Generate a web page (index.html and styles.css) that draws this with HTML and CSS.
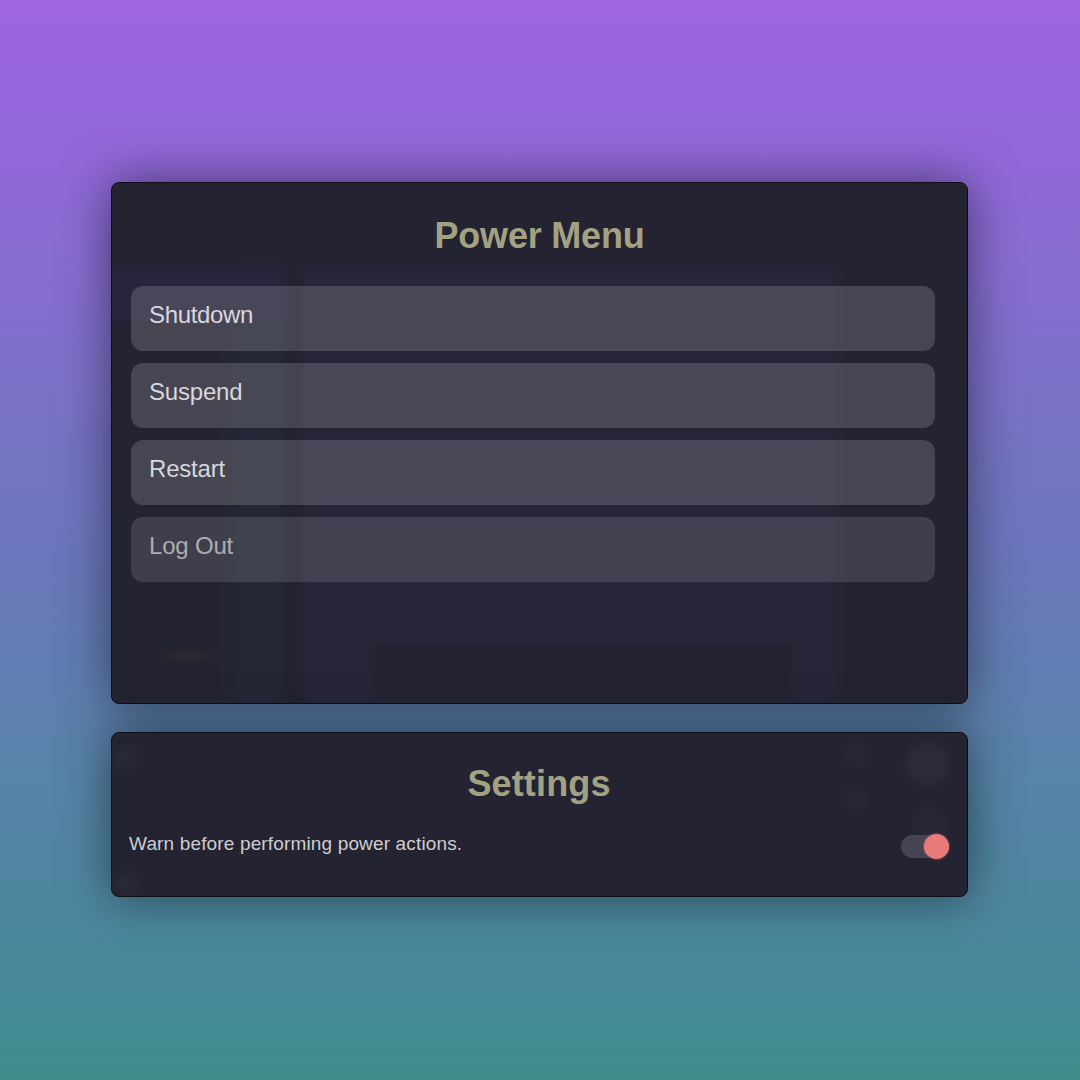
FILE: index.html
```html
<!DOCTYPE html>
<html lang="en">
<head>
<meta charset="utf-8">
<title>Power Menu</title>
<link rel="stylesheet" href="styles.css">
</head>
<body>
<main class="page">
  <section class="card power">
    <h1 class="title">Power Menu</h1>
    <div class="actions">
      <button class="action action-long">Shutdown</button>
      <button class="action">Suspend</button>
      <button class="action">Restart</button>
      <button class="action action-disabled">Log Out</button>
    </div>
  </section>
  <section class="card settings">
    <h1 class="title">Settings</h1>
    <div class="setting">
      <span class="label">Warn before performing power actions.</span>
      <span class="switch" role="switch" aria-checked="true"><span class="knob"></span></span>
    </div>
  </section>
</main>
</body>
</html>
```
FILE: styles.css
```css
* { box-sizing: border-box; }
body {
  margin: 0;
  font-family: "Liberation Sans", Arial, sans-serif;
}
.page {
  height: 1080px;
  padding: 182px 112px 0 111px;
  display: flex;
  flex-direction: column;
  gap: 28px;
  overflow: hidden;
  background: linear-gradient(#9d64e2 0, #9368da 140px, #6a77bb 560px, #5784a8 780px, #4a879c 940px, #3e8c8b 1080px);
}
.card {
  border: 1px solid #0e0e1b;
  border-radius: 8px;
  background-color: #242331;
  box-shadow: 0 0 50px rgba(0, 0, 0, 0.5);
}
.power {
  height: 522px;
  padding: 32px 32px 0 19px;
  /* faint window shapes showing through the translucent panel */
  background-image:
    radial-gradient(ellipse at center, rgba(56, 42, 48, .55), transparent 70%),
    linear-gradient(90deg, transparent 258px, #242331 264px, #242331 676px, transparent 684px),
    linear-gradient(#242331, transparent),
    linear-gradient(90deg, #28243b 165px, transparent 180px),
    linear-gradient(90deg, transparent 105px, #252736 130px, #252736 165px, #222230 178px, #222230 188px, #272639 194px, #272639 715px, transparent 735px);
  background-repeat: no-repeat;
  background-size: 74px 18px, 100% 62px, 100% 14px, 100% 58px, 100% 446px;
  background-position: 40px 464px, 0 460px, 0 76px, 0 80px, 0 78px;
}
.settings {
  height: 165px;
  padding: 30px 18px 0 17px;
  background-image:
    radial-gradient(circle at 815px 31px, #2b2a39 16px, transparent 27px),
    radial-gradient(circle at 817px 92px, #282736 10px, transparent 22px),
    radial-gradient(circle at 745px 21px, #282735 6px, transparent 17px),
    radial-gradient(circle at 743px 66px, #282735 6px, transparent 17px),
    radial-gradient(circle at 15px 26px, #292837 6px, transparent 18px),
    radial-gradient(circle at 15px 152px, #292837 6px, transparent 17px);
}
.title {
  margin: 0;
  font-size: 36px;
  line-height: 41px;
  letter-spacing: 0.15px;
  text-align: center;
  color: #a2a283;
}
.power .title {
  margin-right: -13px;
  letter-spacing: -0.2px;
}
.actions {
  margin-top: 30px;
  display: flex;
  flex-direction: column;
  gap: 12px;
}
.action {
  height: 65px;
  padding: 0 18px 8px;
  border: 0;
  border-radius: 12px;
  background: rgba(255, 255, 255, 0.155);
  color: #d8d7dd;
  font: 24px/28px "Liberation Sans", Arial, sans-serif;
  letter-spacing: -0.2px;
  text-align: left;
}
.action-long { letter-spacing: -0.35px; }
.action-disabled {
  background: rgba(255, 255, 255, 0.125);
  color: #adacb4;
}
.setting {
  margin-top: 29px;
  display: flex;
  align-items: center;
  justify-content: space-between;
}
.label {
  font-size: 19px;
  line-height: 22px;
  letter-spacing: 0.15px;
  padding-bottom: 4px;
  color: #cecdd0;
}
.switch {
  width: 48px;
  height: 23px;
  border-radius: 12px;
  background: #464453;
  display: flex;
  align-items: center;
  justify-content: flex-end;
}
.knob {
  width: 25px;
  height: 25px;
  flex: none;
  border-radius: 50%;
  background: #e97b7b;
  box-shadow: 0 0 3px #e97b7b99;
}
```
